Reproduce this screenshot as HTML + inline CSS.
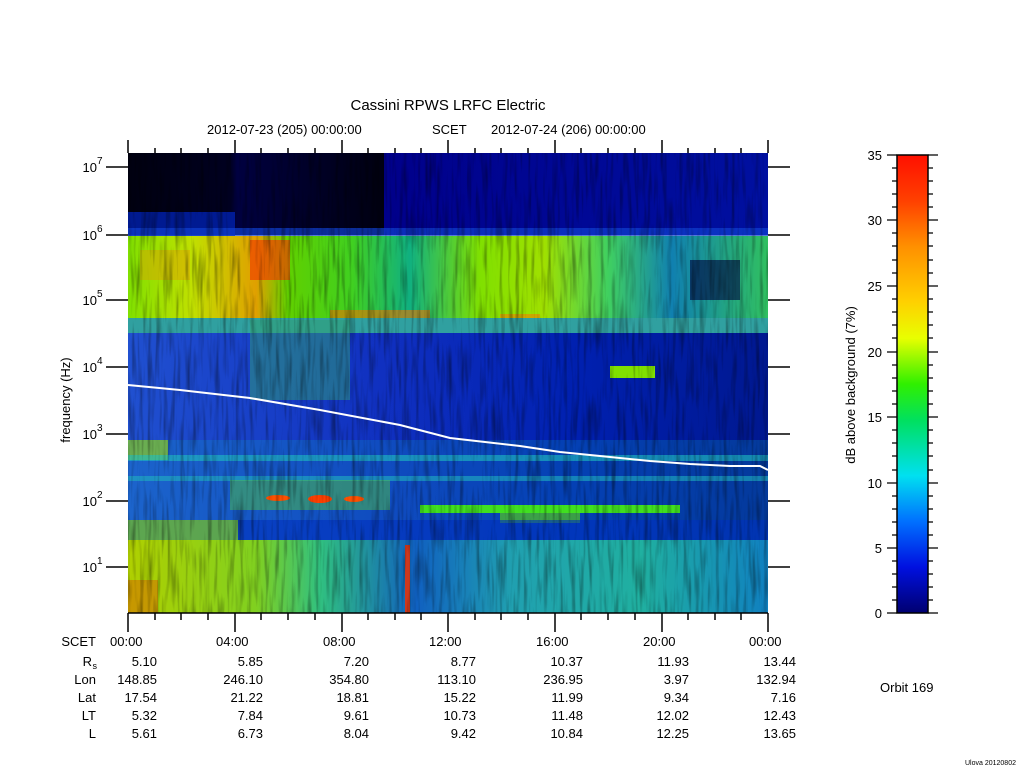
<!DOCTYPE html>
<html><head><meta charset="utf-8"><style>
html,body{margin:0;padding:0;background:#fff;width:1024px;height:768px;overflow:hidden}
svg{display:block}
text{font-family:"Liberation Sans",sans-serif;fill:#000}
</style></head><body>
<svg width="1024" height="768" viewBox="0 0 1024 768" xmlns="http://www.w3.org/2000/svg">
<defs>
<linearGradient id="cb" x1="0" y1="1" x2="0" y2="0">
<stop offset="0" stop-color="#000070"/>
<stop offset="0.1" stop-color="#0010e0"/>
<stop offset="0.2" stop-color="#0070ff"/>
<stop offset="0.3" stop-color="#00e0f0"/>
<stop offset="0.42" stop-color="#00e060"/>
<stop offset="0.5" stop-color="#30f000"/>
<stop offset="0.6" stop-color="#e8ff00"/>
<stop offset="0.68" stop-color="#ffd000"/>
<stop offset="0.8" stop-color="#ff9000"/>
<stop offset="0.9" stop-color="#ff4000"/>
<stop offset="1" stop-color="#ff1000"/>
</linearGradient>
<linearGradient id="top" x1="0" y1="0" x2="1" y2="0">
<stop offset="0" stop-color="#000010"/>
<stop offset="0.16" stop-color="#000020"/>
<stop offset="0.17" stop-color="#000040"/>
<stop offset="0.4" stop-color="#000010"/>
<stop offset="0.4" stop-color="#00008a"/>
<stop offset="1" stop-color="#0010a0"/>
</linearGradient>
<linearGradient id="hot" x1="0" y1="0" x2="1" y2="0">
<stop offset="0" stop-color="#80e000"/>
<stop offset="0.1" stop-color="#c0e000"/>
<stop offset="0.2" stop-color="#e0a000"/>
<stop offset="0.25" stop-color="#60d000"/>
<stop offset="0.35" stop-color="#40d020"/>
<stop offset="0.44" stop-color="#10b080"/>
<stop offset="0.55" stop-color="#80e000"/>
<stop offset="0.65" stop-color="#a0e000"/>
<stop offset="0.75" stop-color="#40d060"/>
<stop offset="0.85" stop-color="#1080b0"/>
<stop offset="1" stop-color="#30c060"/>
</linearGradient>
<linearGradient id="mid" x1="0" y1="0" x2="1" y2="0">
<stop offset="0" stop-color="#2050d0"/>
<stop offset="0.4" stop-color="#1030c0"/>
<stop offset="0.7" stop-color="#0020b0"/>
<stop offset="1" stop-color="#001890"/>
</linearGradient>
<linearGradient id="low" x1="0" y1="0" x2="1" y2="0">
<stop offset="0" stop-color="#b0d000"/>
<stop offset="0.2" stop-color="#80d020"/>
<stop offset="0.3" stop-color="#30c080"/>
<stop offset="0.45" stop-color="#1060c0"/>
<stop offset="0.6" stop-color="#20a0b0"/>
<stop offset="0.8" stop-color="#20b0a0"/>
<stop offset="1" stop-color="#1080c0"/>
</linearGradient>
<filter id="n" x="0" y="0" width="1" height="1">
<feTurbulence type="fractalNoise" baseFrequency="0.25 0.02" numOctaves="2" seed="3"/>
<feColorMatrix type="matrix" values="0 0 0 0 0  0 0 0 0 0  0 0 0 0 0  0 0 0 -2.2 1.2"/>
</filter>
</defs>

<text x="448" y="110" font-size="15" text-anchor="middle">Cassini RPWS LRFC Electric</text>
<text x="207" y="134" font-size="13">2012-07-23 (205) 00:00:00</text>
<text x="432" y="134" font-size="13">SCET</text>
<text x="491" y="134" font-size="13">2012-07-24 (206) 00:00:00</text>

<!-- spectrogram -->
<rect x="128" y="153" width="640" height="82" fill="url(#top)"/>
<rect x="128" y="212" width="107" height="25" fill="#0020b0" opacity="0.8"/>
<rect x="128" y="228" width="640" height="10" fill="#1040d0" opacity="0.7"/>
<rect x="128" y="236" width="640" height="84" fill="url(#hot)"/>
<rect x="250" y="240" width="40" height="40" fill="#f04000" opacity="0.7"/>
<rect x="140" y="250" width="50" height="30" fill="#f09000" opacity="0.4"/>
<rect x="330" y="310" width="100" height="18" fill="#f07000" opacity="0.6"/>
<rect x="500" y="314" width="40" height="16" fill="#f08000" opacity="0.6"/>
<rect x="640" y="318" width="40" height="16" fill="#d0a000" opacity="0.5"/>
<rect x="690" y="260" width="50" height="40" fill="#000040" opacity="0.6"/>
<rect x="128" y="318" width="640" height="15" fill="#30a0a0"/>
<rect x="128" y="333" width="640" height="110" fill="url(#mid)"/>
<rect x="250" y="320" width="100" height="80" fill="#30a070" opacity="0.5"/>
<rect x="610" y="366" width="45" height="12" fill="#80e000"/>
<rect x="128" y="440" width="640" height="100" fill="url(#mid)"/>
<rect x="128" y="440" width="640" height="100" fill="#10a0c0" opacity="0.25"/>
<rect x="128" y="440" width="40" height="20" fill="#a0e000" opacity="0.6"/>
<rect x="128" y="455" width="640" height="6" fill="#20c0c0" opacity="0.6"/>
<rect x="128" y="476" width="640" height="5" fill="#20b0c0" opacity="0.6"/>
<rect x="230" y="480" width="160" height="30" fill="#50c040" opacity="0.5"/>
<ellipse cx="278" cy="498" rx="12" ry="3" fill="#ff5000"/>
<ellipse cx="320" cy="499" rx="12" ry="4" fill="#ff4000"/>
<ellipse cx="354" cy="499" rx="10" ry="3" fill="#ff5000"/>
<rect x="420" y="505" width="260" height="8" fill="#40e020"/>
<rect x="500" y="513" width="80" height="10" fill="#60e000" opacity="0.6"/>
<rect x="128" y="520" width="640" height="20" fill="#0030c0" opacity="0.6"/>
<rect x="128" y="520" width="110" height="20" fill="#80d020" opacity="0.7"/>
<rect x="128" y="540" width="640" height="73" fill="url(#low)"/>
<rect x="405" y="545" width="5" height="68" fill="#f03000" opacity="0.85"/>
<rect x="128" y="580" width="30" height="33" fill="#e06000" opacity="0.5"/>
<rect x="128" y="153" width="640" height="460" filter="url(#n)" opacity="0.4"/>
<polyline points="128,385 180,390 250,398 320,410 400,425 450,438 520,446 560,452 600,456 650,461 690,464 730,466 760,466 768,470" fill="none" stroke="#fff" stroke-width="2"/>

<!-- axes -->
<g stroke="#000" stroke-width="1.5" fill="none">
<path d="M128,613 H768"/>
<path d="M128,140V153 M235,140V153 M342,140V153 M448,140V153 M555,140V153 M662,140V153 M768,140V153
M155,148V153 M181,148V153 M208,148V153 M261,148V153 M288,148V153 M315,148V153 M368,148V153 M395,148V153 M421,148V153 M475,148V153 M501,148V153 M528,148V153 M581,148V153 M608,148V153 M635,148V153 M688,148V153 M715,148V153 M741,148V153"/>
<path d="M128,613V632 M235,613V632 M342,613V632 M448,613V632 M555,613V632 M662,613V632 M768,613V632
M155,613V620 M181,613V620 M208,613V620 M261,613V620 M288,613V620 M315,613V620 M368,613V620 M395,613V620 M421,613V620 M475,613V620 M501,613V620 M528,613V620 M581,613V620 M608,613V620 M635,613V620 M688,613V620 M715,613V620 M741,613V620"/>
<path d="M106,167H128 M106,235H128 M106,300H128 M106,367H128 M106,434H128 M106,501H128 M106,567H128
M768,167H790 M768,235H790 M768,300H790 M768,367H790 M768,434H790 M768,501H790 M768,567H790"/>
</g>
<g font-size="13" text-anchor="end">
<text x="97" y="172">10</text><text x="97" y="240">10</text><text x="97" y="305">10</text><text x="97" y="372">10</text><text x="97" y="439">10</text><text x="97" y="506">10</text><text x="97" y="572">10</text>
</g>
<g font-size="10">
<text x="97" y="164">7</text><text x="97" y="232">6</text><text x="97" y="297">5</text><text x="97" y="364">4</text><text x="97" y="431">3</text><text x="97" y="498">2</text><text x="97" y="564">1</text>
</g>
<text transform="translate(70,400) rotate(-90)" font-size="13" text-anchor="middle">frequency (Hz)</text>

<!-- colorbar -->
<rect x="897" y="155" width="31" height="458" fill="url(#cb)" stroke="#000" stroke-width="1.5"/>
<g stroke="#000" stroke-width="1.3">
<path d="M887,155H897 M887,220H897 M887,286H897 M887,352H897 M887,417H897 M887,483H897 M887,548H897 M887,613H897
M928,155H938 M928,220H938 M928,286H938 M928,352H938 M928,417H938 M928,483H938 M928,548H938 M928,613H938"/>
<path d="M892,168H897 M892,181H897 M892,194H897 M892,207H897 M892,233H897 M892,246H897 M892,260H897 M892,273H897 M892,299H897 M892,312H897 M892,325H897 M892,338H897 M892,365H897 M892,378H897 M892,391H897 M892,404H897 M892,430H897 M892,443H897 M892,456H897 M892,470H897 M892,496H897 M892,509H897 M892,522H897 M892,535H897 M892,561H897 M892,574H897 M892,587H897 M892,600H897
M928,168H933 M928,181H933 M928,194H933 M928,207H933 M928,233H933 M928,246H933 M928,260H933 M928,273H933 M928,299H933 M928,312H933 M928,325H933 M928,338H933 M928,365H933 M928,378H933 M928,391H933 M928,404H933 M928,430H933 M928,443H933 M928,456H933 M928,470H933 M928,496H933 M928,509H933 M928,522H933 M928,535H933 M928,561H933 M928,574H933 M928,587H933 M928,600H933"/>
</g>
<g font-size="13" text-anchor="end">
<text x="882" y="160">35</text><text x="882" y="225">30</text><text x="882" y="291">25</text><text x="882" y="357">20</text><text x="882" y="422">15</text><text x="882" y="488">10</text><text x="882" y="553">5</text><text x="882" y="618">0</text>
</g>
<text transform="translate(855,385) rotate(-90)" font-size="13" text-anchor="middle">dB above background (7%)</text>

<!-- table -->
<g font-size="13" text-anchor="end">
<text x="96" y="646">SCET</text>
<text x="92" y="666">R</text><text x="97" y="669" font-size="9">s</text>
<text x="96" y="684">Lon</text><text x="96" y="702">Lat</text><text x="96" y="720">LT</text><text x="96" y="738">L</text>
</g>
<g font-size="13" text-anchor="start">
<text x="110" y="646">00:00</text><text x="216" y="646">04:00</text><text x="323" y="646">08:00</text><text x="429" y="646">12:00</text><text x="536" y="646">16:00</text><text x="643" y="646">20:00</text><text x="749" y="646">00:00</text>
</g>
<g font-size="13" text-anchor="end">
<text x="157" y="666">5.10</text><text x="263" y="666">5.85</text><text x="369" y="666">7.20</text><text x="476" y="666">8.77</text><text x="583" y="666">10.37</text><text x="689" y="666">11.93</text><text x="796" y="666">13.44</text>
<text x="157" y="684">148.85</text><text x="263" y="684">246.10</text><text x="369" y="684">354.80</text><text x="476" y="684">113.10</text><text x="583" y="684">236.95</text><text x="689" y="684">3.97</text><text x="796" y="684">132.94</text>
<text x="157" y="702">17.54</text><text x="263" y="702">21.22</text><text x="369" y="702">18.81</text><text x="476" y="702">15.22</text><text x="583" y="702">11.99</text><text x="689" y="702">9.34</text><text x="796" y="702">7.16</text>
<text x="157" y="720">5.32</text><text x="263" y="720">7.84</text><text x="369" y="720">9.61</text><text x="476" y="720">10.73</text><text x="583" y="720">11.48</text><text x="689" y="720">12.02</text><text x="796" y="720">12.43</text>
<text x="157" y="738">5.61</text><text x="263" y="738">6.73</text><text x="369" y="738">8.04</text><text x="476" y="738">9.42</text><text x="583" y="738">10.84</text><text x="689" y="738">12.25</text><text x="796" y="738">13.65</text>
</g>
<text x="880" y="692" font-size="13">Orbit 169</text>
<text x="965" y="765" font-size="7">Ulova 20120802</text>
</svg>
</body></html>
